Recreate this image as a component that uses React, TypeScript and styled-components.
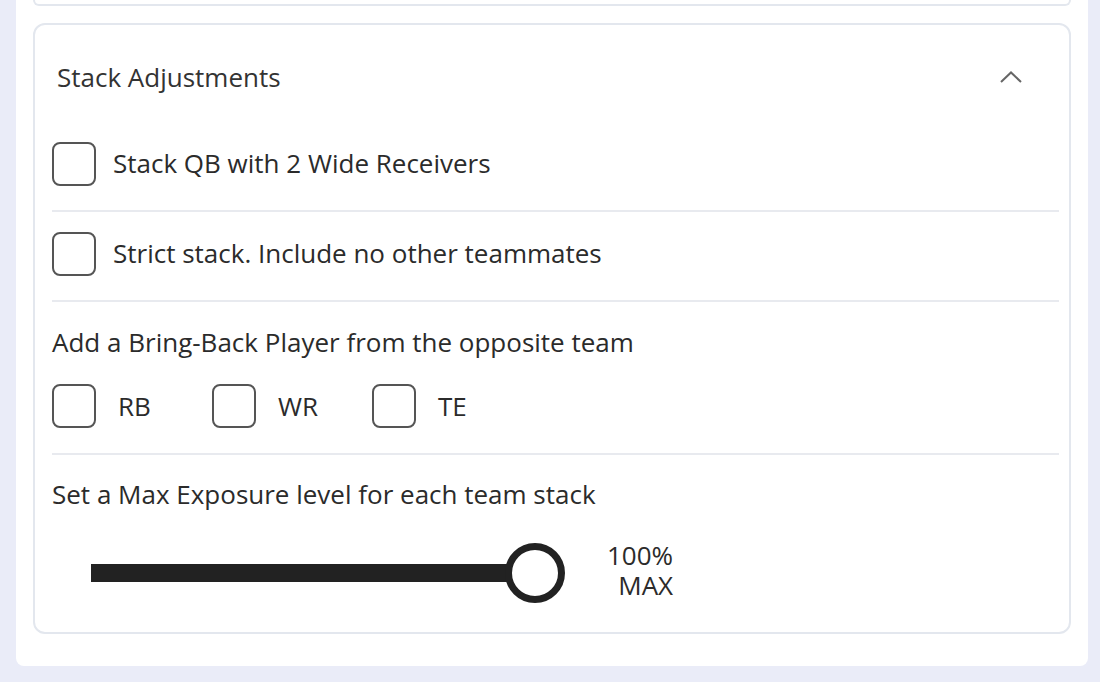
import React from "react";
import styled, { createGlobalStyle } from "styled-components";

const Global = createGlobalStyle`
  html, body { margin: 0; padding: 0; background: #eaecf8; }
  body { font-family: "Open Sans", "Noto Sans", sans-serif; color: #2b2b2b; }
  * { box-sizing: border-box; }
`;

const Panel = styled.div`
  margin: 0 12px 0 16px;
  background: #fff;
  border-radius: 0 0 8px 8px;
  padding: 0 17px 32px 17px;
`;

const PrevCard = styled.div`
  height: 6px;
  border: 2px solid #e3e7ee;
  border-top: none;
  border-radius: 0 0 12px 12px;
  margin-bottom: 17px;
`;

const Card = styled.div`
  border: 2px solid #e3e7ee;
  border-radius: 12px;
  padding: 0 10px 0 17px;
`;

const Header = styled.div`
  display: flex;
  align-items: center;
  justify-content: space-between;
  padding: 36px 37px 28px 5px;
  font-size: 26px;
  line-height: 32px;
  color: #333;
`;

const Row = styled.label<{ $top: number }>`
  display: flex;
  align-items: center;
  gap: 17px;
  padding: ${(p) => p.$top}px 0 24px;
  border-bottom: 2px solid #e8eaef;
  font-size: 26px;
  line-height: 44px;
`;

const RowText = styled.span`
  margin-top: -2px;
`;

const Box = styled.span`
  width: 44px;
  height: 44px;
  flex: none;
  border: 2px solid #555;
  border-radius: 8px;
  background: #fff;
`;

const Section = styled.div<{ $top: number; $bottom: number; $last?: boolean }>`
  padding: ${(p) => p.$top}px 0 ${(p) => p.$bottom}px;
  border-bottom: ${(p) => (p.$last ? "none" : "2px solid #e8eaef")};
`;

const SectionTitle = styled.div`
  font-size: 26px;
  line-height: 32px;
`;

const Options = styled.div`
  display: flex;
  margin-top: 26px;
`;

const Option = styled.label`
  display: flex;
  align-items: center;
  gap: 22px;
  width: 160px;
  font-size: 26px;
  line-height: 44px;
`;

const SliderRow = styled.div`
  display: flex;
  align-items: center;
  margin-top: 36px;
  padding-left: 39px;
`;

const Track = styled.div`
  position: relative;
  width: 432px;
  height: 18px;
  background: #222;
  margin-right: 42px;
`;

const Thumb = styled.span`
  position: absolute;
  right: -42px;
  top: 50%;
  transform: translateY(-50%);
  width: 60px;
  height: 60px;
  border-radius: 50%;
  border: 7px solid #222;
  background: #fff;
`;

const Value = styled.div`
  margin-left: 42px;
  margin-top: -6px;
  display: flex;
  flex-direction: column;
  align-items: flex-end;
`;

const ValueLine = styled.span`
  display: block;
  font-size: 26px;
  line-height: 30px;
  height: 30px;
  color: #2b2b2b;
`;

export default function App() {
  return (
    <>
      <Global />
      <Panel>
        <PrevCard />
        <Card>
          <Header>
            <span>Stack Adjustments</span>
            <svg width="22" height="12" viewBox="0 0 22 12" fill="none">
              <path d="M1 11 L11 1.5 L21 11" stroke="#666" strokeWidth="2" />
            </svg>
          </Header>
          <Row $top={21}>
            <Box />
            <RowText>Stack QB with 2 Wide Receivers</RowText>
          </Row>
          <Row $top={20}>
            <Box />
            <RowText>Strict stack. Include no other teammates</RowText>
          </Row>
          <Section $top={24} $bottom={25}>
            <SectionTitle>Add a Bring-Back Player from the opposite team</SectionTitle>
            <Options>
              <Option><Box />RB</Option>
              <Option><Box />WR</Option>
              <Option><Box />TE</Option>
            </Options>
          </Section>
          <Section $top={23} $bottom={32} $last>
            <SectionTitle>Set a Max Exposure level for each team stack</SectionTitle>
            <SliderRow>
              <Track>
                <Thumb />
              </Track>
              <Value>
                <ValueLine>100%</ValueLine>
                <ValueLine>MAX</ValueLine>
              </Value>
            </SliderRow>
          </Section>
        </Card>
      </Panel>
    </>
  );
}
